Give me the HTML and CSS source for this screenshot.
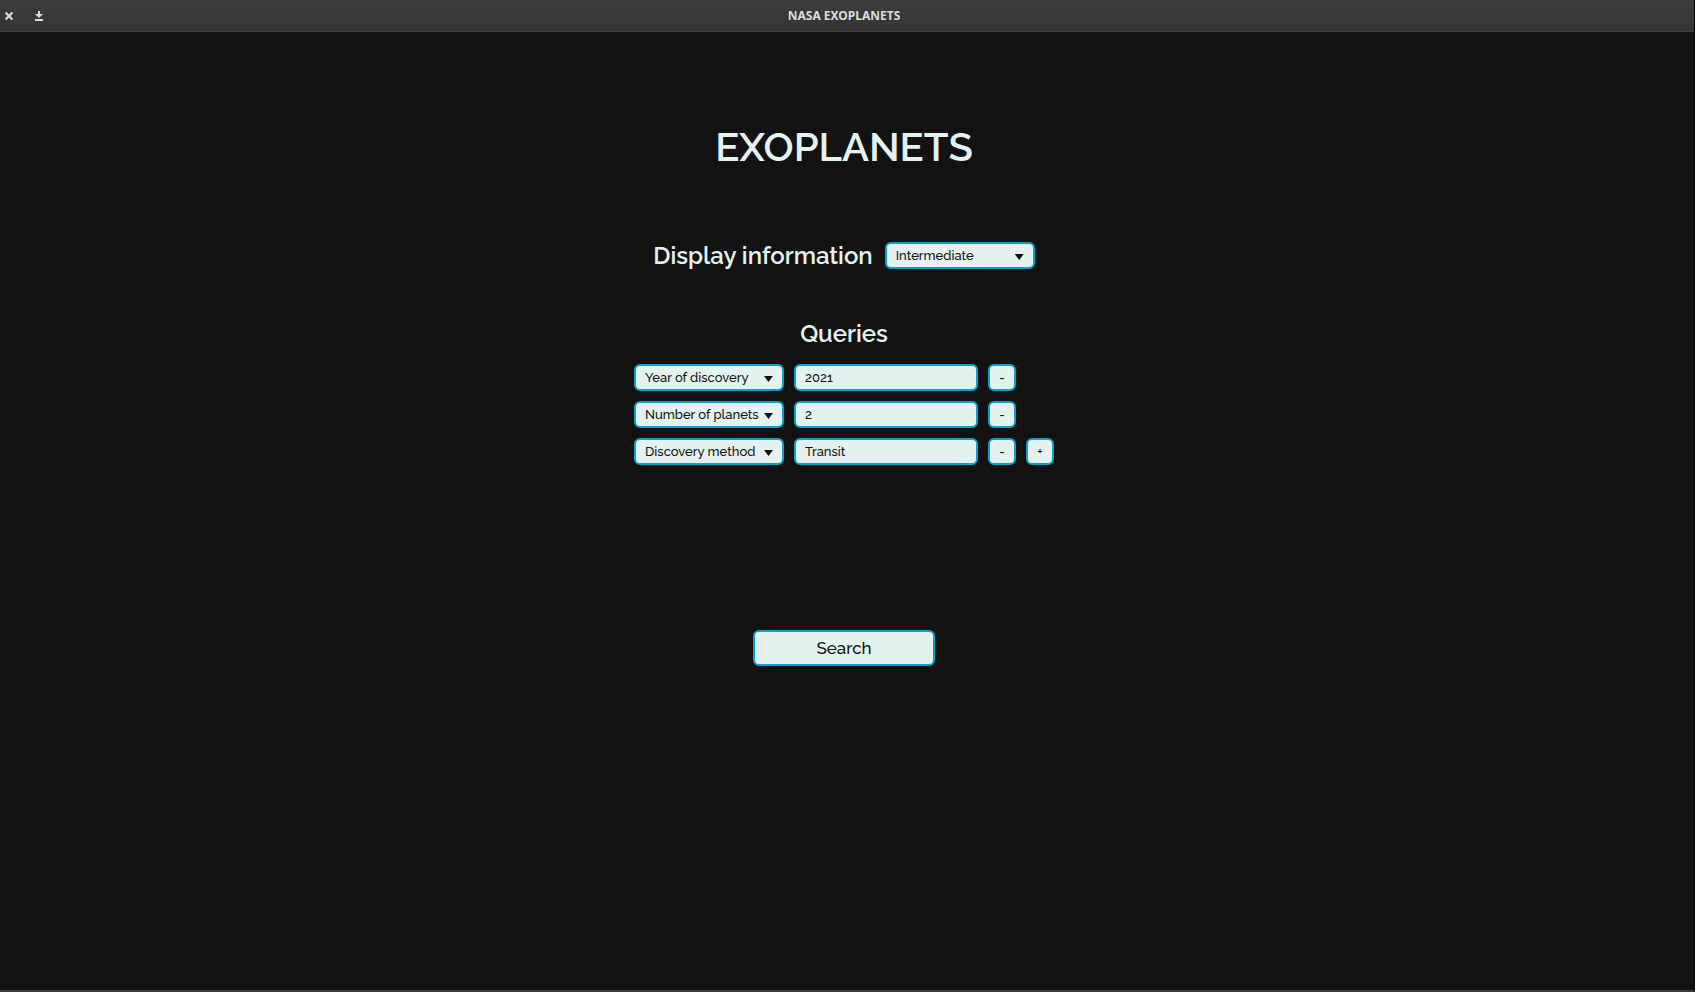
FILE: index.html
```html
<!DOCTYPE html>
<html lang="en">
<head>
<meta charset="utf-8">
<title>NASA EXOPLANETS</title>
<link rel="stylesheet" href="styles.css">
</head>
<body>
<header class="titlebar">
  <div class="window-controls">
    <button class="window-button" type="button" aria-label="Close">
      <svg width="8" height="8" viewBox="0 0 8 8"><path d="M.5 .5l7 7M7.500 .5L.5 7.500" stroke="currentColor" stroke-width="2.200"/></svg>
    </button>
    <button class="window-button" type="button" aria-label="Minimize">
      <svg width="8" height="10" viewBox="0 0 8 10"><path d="M3 0h2v3h3L4 7 0 3h3zM0 8h8v2H0z" fill="currentColor"/></svg>
    </button>
  </div>
  <div class="window-title">NASA EXOPLANETS</div>
</header>
<main class="page">
  <h1 class="title">EXOPLANETS</h1>
  <form class="search-form">
    <div class="display">
      <label class="heading" for="display">Display information</label>
      <span class="dropdown"><select class="field" id="display"><option>Intermediate</option></select></span>
    </div>
    <h2 class="heading">Queries</h2>
    <div class="queries">
      <div class="query">
        <span class="dropdown"><select class="field" aria-label="Query type 1"><option>Year of discovery</option></select></span>
        <input class="field value" type="text" aria-label="Query value 1" value="2021">
        <button class="field step" type="button" aria-label="Remove query 1">-</button>
      </div>
      <div class="query">
        <span class="dropdown"><select class="field" aria-label="Query type 2"><option>Number of planets</option></select></span>
        <input class="field value" type="text" aria-label="Query value 2" value="2">
        <button class="field step" type="button" aria-label="Remove query 2">-</button>
      </div>
      <div class="query">
        <span class="dropdown"><select class="field" aria-label="Query type 3"><option>Discovery method</option></select></span>
        <input class="field value" type="text" aria-label="Query value 3" value="Transit">
        <button class="field step" type="button" aria-label="Remove query 3">-</button>
        <button class="field step" type="button" aria-label="Add query">+</button>
      </div>
    </div>
    <button class="field search" type="submit">Search</button>
  </form>
</main>
</body>
</html>
```
FILE: styles.css
```css
* {
  box-sizing: border-box;
}

body {
  display: flex;
  flex-direction: column;
  min-height: 100vh;
  margin: 0;
  background: #121212;
  color: #e4f3f0;
  font-family: Raleway, Lato, sans-serif;
  font-weight: 500;
  border-right: 1px solid #080808;
  border-bottom: 2px solid #3c3b3c;
}

.titlebar {
  display: grid;
  grid-template-columns: 1fr auto 1fr;
  align-items: center;
  height: 32px;
  padding: 0 10px 0 4px;
  background: linear-gradient(#3d3d3d, #353535);
  border-bottom: 1px solid #404040;
  color: #dcdcdc;
}

.window-controls {
  display: flex;
  gap: 20px;
}

.window-button {
  display: flex;
  align-items: center;
  justify-content: center;
  width: 10px;
  height: 12px;
  padding: 0;
  border: 0;
  background: none;
  color: inherit;
}

.window-title {
  font: 700 12px "Noto Sans", sans-serif;
}

.page {
  flex: 1;
  padding: 91px 6px 0 0;
}

.title {
  margin: 0;
  font-size: 40px;
  line-height: 48px;
  text-align: center;
}

.title,
.heading {
  font-weight: 600;
}

.search-form {
  display: flex;
  flex-direction: column;
  align-items: center;
  padding-top: 69px;
}

.display {
  display: flex;
  align-items: center;
  gap: 12px;
  margin-bottom: 47px;
}

.heading {
  margin: 0;
  font-size: 24px;
  line-height: 31px;
}

.queries {
  display: flex;
  flex-direction: column;
  gap: 10px;
  margin: 15px 0 165px;
}

.query {
  display: flex;
  gap: 10px;
}

.field {
  height: 27px;
  margin: 0;
  padding: 0 9px;
  border: 2px solid #0aa2cb;
  border-radius: 6px;
  background: #e4f3f0;
  color: #121212;
  font: inherit;
  font-size: 13px;
}

.dropdown {
  display: flex;
  position: relative;
}

.dropdown .field {
  width: 150px;
  appearance: none;
}

.dropdown::after {
  content: "";
  position: absolute;
  right: 11px;
  top: 12px;
  width: 9px;
  height: 6px;
  background: #121212;
  clip-path: polygon(0 0, 100% 0, 50% 100%);
  pointer-events: none;
}

.value {
  width: 184px;
}

.step {
  width: 28px;
  padding: 0;
}

.search {
  width: 182px;
  height: 36px;
  font-size: 17px;
}
```
